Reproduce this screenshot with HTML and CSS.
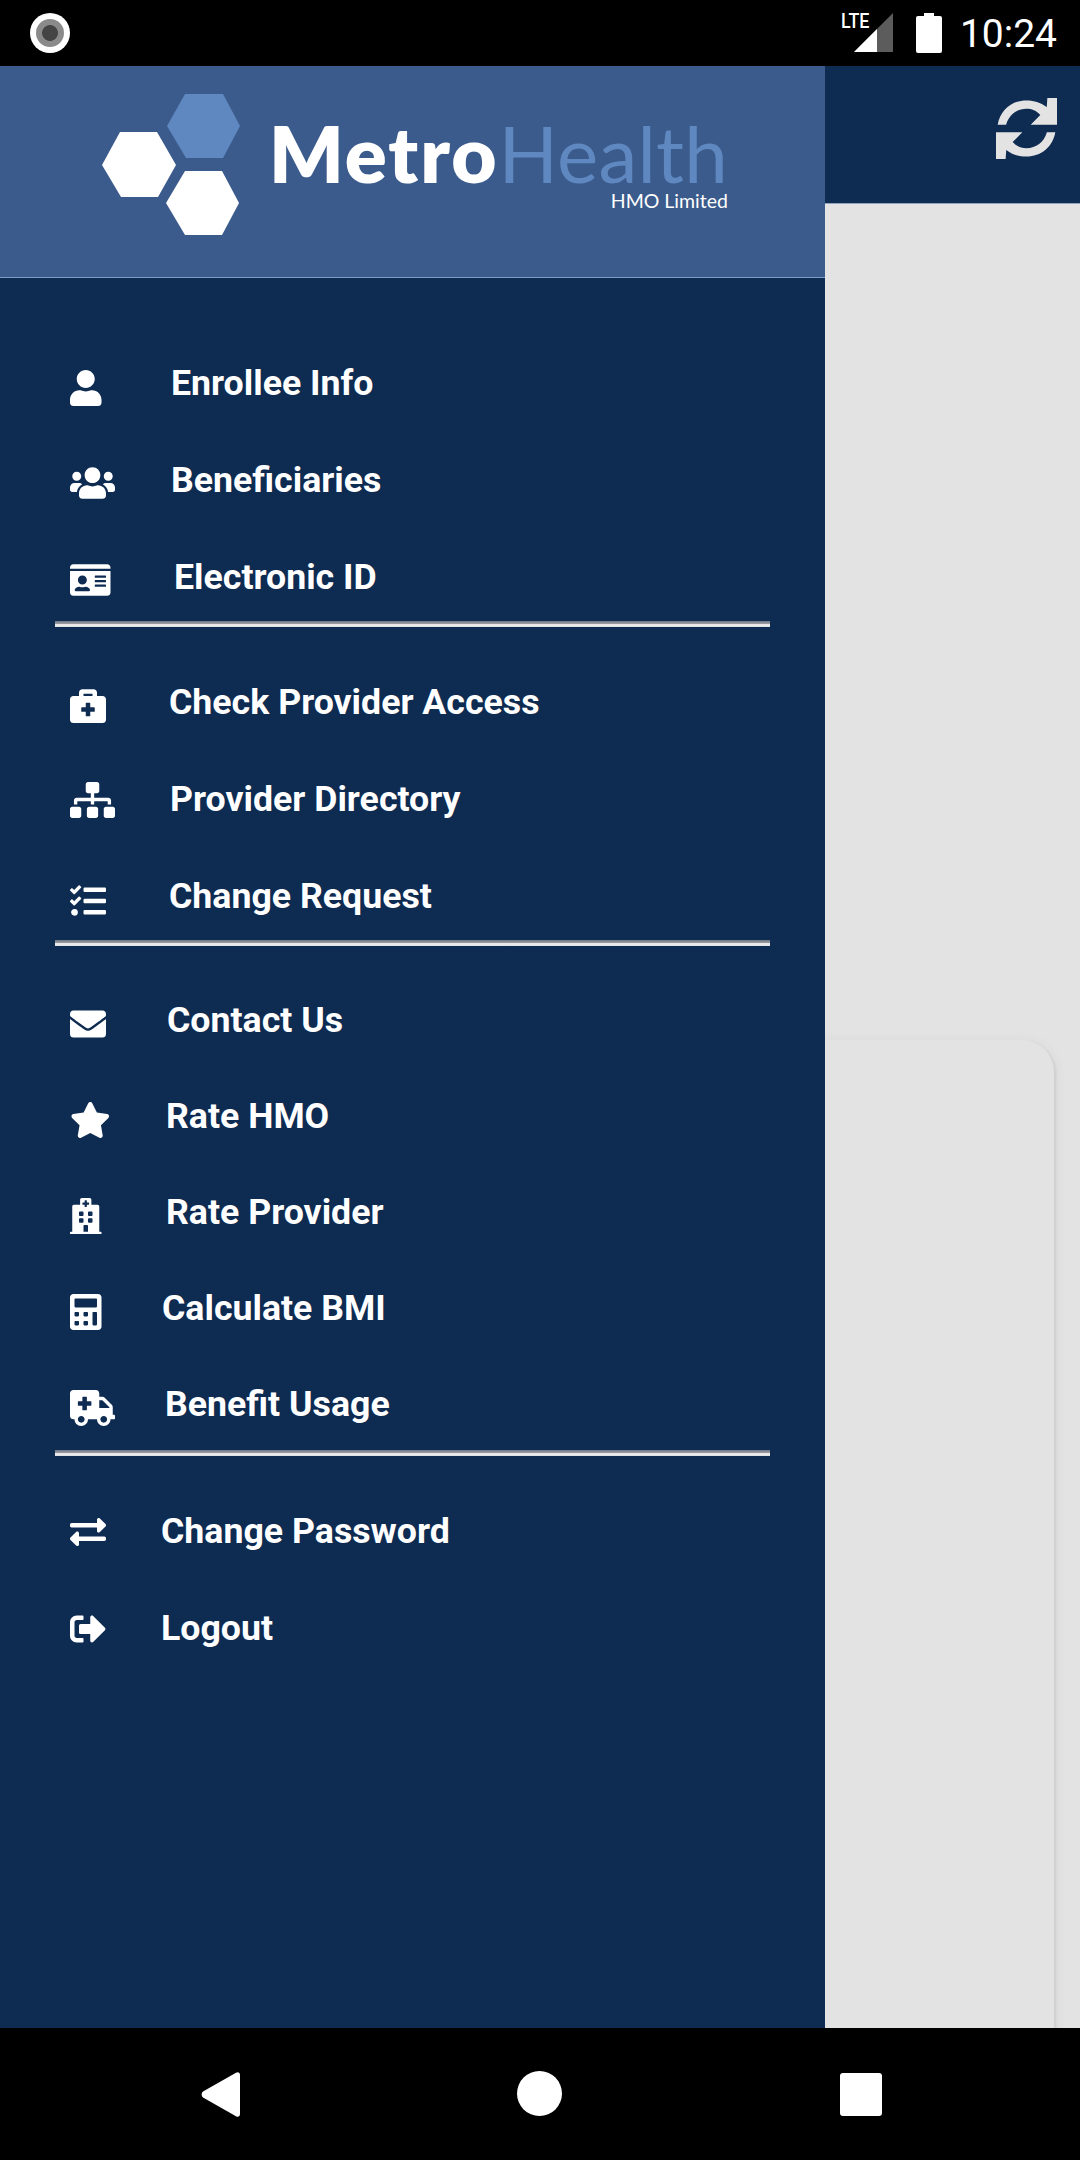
FILE: index.html
```html
<!DOCTYPE html>
<html lang="en">
<head>
    <meta charset="UTF-8">
    <meta name="viewport" content="width=device-width, initial-scale=1.0">
    <title>MetroHealth HMO</title>
    <link rel="stylesheet" href="styles.css">
</head>
<body>

    <div class="screen">
        <!-- Android status bar -->
        <div class="status-bar">
            <span class="record-dot"><span class="record-inner"></span></span>
            <div class="status-right">
                <span class="lte">LTE</span>
                <svg class="signal" viewBox="0 0 39 39"><path fill="#5c5c5c" d="M39 0V39H0z"/><path fill="#fff" d="M23 16V39H0z"/></svg>
                <svg class="battery" viewBox="0 0 26 40"><path fill="#fff" d="M8 0h10v3h6a2 2 0 0 1 2 2v33a2 2 0 0 1-2 2H2a2 2 0 0 1-2-2V5a2 2 0 0 1 2-2h6z"/></svg>
                <span class="clock">10:24</span>
            </div>
        </div>

        <div class="main">
            <!-- Drawer -->
            <div class="drawer">
                <div class="drawer-head">
                    <svg class="hexagons" viewBox="100 93 141 144">
                        <polygon fill="#5f88c0" points="185,94 223,94 240,126 223,158 186,158 167,126"/>
                        <polygon fill="#fff" points="120,132 157,132 176,165 158,197 121,197 102,165"/>
                        <polygon fill="#fff" points="185,171 222,171 239,203 222,235 185,235 166,203"/>
                    </svg>
                    <div class="wordmark">
                        <div class="brand"><span class="brand-metro">Metro</span><span class="brand-health">Health</span></div>
                        <div class="brand-sub">HMO Limited</div>
                    </div>
                </div>

                <div class="menu-group first">
                    <div class="menu-row">
                        <div class="slot s101"><svg class="icon icon-low" viewBox="0 0 448 512"><path d="M224 256c70.7 0 128-57.3 128-128S294.7 0 224 0 96 57.3 96 128s57.3 128 128 128zm89.6 32h-16.7c-22.2 10.2-46.9 16-72.9 16s-50.6-5.8-72.9-16h-16.7C60.2 288 0 348.2 0 422.4V464c0 26.5 21.5 48 48 48h352c26.5 0 48-21.5 48-48v-41.6c0-74.2-60.2-134.4-134.4-134.4z"/></svg></div>
                        <span class="label">Enrollee Info</span>
                    </div>
                    <div class="menu-row">
                        <div class="slot s101"><svg class="icon" viewBox="0 0 640 512"><path d="M96 224c35.3 0 64-28.7 64-64s-28.7-64-64-64-64 28.7-64 64 28.7 64 64 64zm448 0c35.3 0 64-28.7 64-64s-28.7-64-64-64-64 28.7-64 64 28.7 64 64 64zm32 32h-64c-17.6 0-33.5 7.1-45.1 18.6 40.3 22.1 68.9 62 75.1 109.4h66c17.7 0 32-14.3 32-32v-32c0-35.3-28.7-64-64-64zm-256 0c61.9 0 112-50.1 112-112S381.9 32 320 32 208 82.1 208 144s50.1 112 112 112zm76.8 32h-8.3c-20.8 10-43.9 16-68.5 16s-47.6-6-68.5-16h-8.3C179.6 288 128 339.6 128 403.2V432c0 26.5 21.5 48 48 48h288c26.5 0 48-21.5 48-48v-28.8c0-63.6-51.6-115.2-115.2-115.2zm-223.7-13.4C161.5 263.1 145.6 256 128 256H64c-35.3 0-64 28.7-64 64v32c0 17.7 14.3 32 32 32h65.9c6.3-47.4 34.9-87.3 75.2-109.4z"/></svg></div>
                        <span class="label">Beneficiaries</span>
                    </div>
                    <div class="menu-row">
                        <div class="slot s104"><svg class="icon" viewBox="0 0 576 512"><path d="M528 32H48C21.5 32 0 53.5 0 80v16h576V80c0-26.5-21.5-48-48-48zM0 432c0 26.5 21.5 48 48 48h480c26.5 0 48-21.5 48-48V128H0v304zm352-232c0-4.4 3.6-8 8-8h144c4.4 0 8 3.6 8 8v16c0 4.4-3.6 8-8 8H360c-4.4 0-8-3.6-8-8v-16zm0 64c0-4.4 3.6-8 8-8h144c4.4 0 8 3.6 8 8v16c0 4.4-3.6 8-8 8H360c-4.4 0-8-3.6-8-8v-16zm0 64c0-4.4 3.6-8 8-8h144c4.4 0 8 3.6 8 8v16c0 4.4-3.6 8-8 8H360c-4.4 0-8-3.6-8-8v-16zM176 192c35.3 0 64 28.7 64 64s-28.7 64-64 64-64-28.7-64-64 28.7-64 64-64zM67.1 396.2C75.5 370.5 99.6 352 128 352h8.2c12.3 5.1 25.7 8 39.8 8s27.6-2.9 39.8-8h8.2c28.4 0 52.5 18.5 60.9 44.2 3.2 9.9-5.2 19.8-15.6 19.8H82.7c-10.4 0-18.8-10-15.6-19.8z"/></svg></div>
                        <span class="label">Electronic ID</span>
                    </div>
                </div>
                <div class="divider"></div>

                <div class="menu-group">
                    <div class="menu-row">
                        <div class="slot s99"><svg class="icon" viewBox="0 0 512 512"><path fill-rule="evenodd" d="M464 128h-80V80c0-26.5-21.5-48-48-48H176c-26.5 0-48 21.5-48 48v48H48c-26.5 0-48 21.5-48 48v288c0 26.5 21.5 48 48 48h416c26.5 0 48-21.5 48-48V176c0-26.5-21.5-48-48-48zM192 96h128v32H192V96zm160 248c0 4.4-3.6 8-8 8h-56v56c0 4.4-3.6 8-8 8h-48c-4.4 0-8-3.6-8-8v-56h-56c-4.4 0-8-3.6-8-8v-48c0-4.4 3.6-8 8-8h56v-56c0-4.4 3.6-8 8-8h48c4.4 0 8 3.6 8 8v56h56c4.4 0 8 3.6 8 8v48z"/></svg></div>
                        <span class="label">Check Provider Access</span>
                    </div>
                    <div class="menu-row">
                        <div class="slot s100"><svg class="icon icon-high" viewBox="0 0 640 512"><path d="M128 352H32c-17.67 0-32 14.33-32 32v96c0 17.67 14.33 32 32 32h96c17.67 0 32-14.33 32-32v-96c0-17.67-14.33-32-32-32zm-24-80h192v48h48v-48h192v48h48v-57.59c0-21.17-17.23-38.41-38.41-38.41H344v-64h40c17.67 0 32-14.33 32-32V32c0-17.67-14.33-32-32-32H256c-17.67 0-32 14.33-32 32v96c0 17.67 14.33 32 32 32h40v64H94.41C73.23 224 56 241.23 56 262.41V320h48v-48zm264 80h-96c-17.67 0-32 14.33-32 32v96c0 17.67 14.33 32 32 32h96c17.67 0 32-14.33 32-32v-96c0-17.67-14.33-32-32-32zm240 0h-96c-17.67 0-32 14.33-32 32v96c0 17.67 14.33 32 32 32h96c17.67 0 32-14.33 32-32v-96c0-17.67-14.33-32-32-32z"/></svg></div>
                        <span class="label">Provider Directory</span>
                    </div>
                    <div class="menu-row">
                        <div class="slot s99"><svg class="icon icon-low" viewBox="0 0 512 512"><path d="M139.61 35.5a12 12 0 0 0-17 0L58.93 98.81l-22.7-22.12a12 12 0 0 0-17 0L3.53 92.41a12 12 0 0 0 0 17l47.59 47.4a12.78 12.78 0 0 0 17.61 0l15.59-15.62L156.52 69a12.09 12.09 0 0 0 .09-17zm0 159.19a12 12 0 0 0-17 0l-63.68 63.72-22.7-22.1a12 12 0 0 0-17 0L3.53 252a12 12 0 0 0 0 17L51 316.5a12.77 12.77 0 0 0 17.6 0l15.7-15.69 72.2-72.22a12 12 0 0 0 .09-16.9zM64 368c-26.49 0-48.59 21.5-48.59 48S37.53 464 64 464a48 48 0 0 0 0-96zm432 16H208a16 16 0 0 0-16 16v32a16 16 0 0 0 16 16h288a16 16 0 0 0 16-16v-32a16 16 0 0 0-16-16zm0-320H208a16 16 0 0 0-16 16v32a16 16 0 0 0 16 16h288a16 16 0 0 0 16-16V80a16 16 0 0 0-16-16zm0 160H208a16 16 0 0 0-16 16v32a16 16 0 0 0 16 16h288a16 16 0 0 0 16-16v-32a16 16 0 0 0-16-16z"/></svg></div>
                        <span class="label">Change Request</span>
                    </div>
                </div>
                <div class="divider"></div>

                <div class="menu-group tight">
                    <div class="menu-row">
                        <div class="slot s97"><svg class="icon" viewBox="0 0 512 512"><path d="M502.3 190.8c3.9-3.1 9.7-.2 9.7 4.7V400c0 26.5-21.5 48-48 48H48c-26.5 0-48-21.5-48-48V195.6c0-5 5.7-7.8 9.7-4.7 22.4 17.4 52.1 39.5 154.1 113.6 21.1 15.4 56.7 47.8 92.2 47.6 35.7.3 72-32.8 92.3-47.6 102-74.1 131.6-96.3 154-113.7zM256 320c23.2.4 56.6-29.2 73.4-41.4 132.7-96.3 142.8-104.7 173.4-128.7 5.8-4.5 9.2-11.5 9.2-18.9v-19c0-26.5-21.5-48-48-48H48C21.5 64 0 85.5 0 112v19c0 7.4 3.4 14.3 9.2 18.9 30.6 23.9 40.7 32.4 173.4 128.7 16.8 12.2 50.2 41.8 73.4 41.4z"/></svg></div>
                        <span class="label">Contact Us</span>
                    </div>
                    <div class="menu-row">
                        <div class="slot s96"><svg class="icon" viewBox="0 0 576 512"><path d="M259.3 17.8L194 150.2 47.9 171.5c-26.2 3.8-36.7 36.1-17.7 54.6l105.7 103-25 145.5c-4.5 26.3 23.2 46 46.4 33.7L288 439.6l130.7 68.7c23.2 12.2 50.9-7.4 46.4-33.7l-25-145.5 105.7-103c19-18.5 8.5-50.8-17.7-54.6L382 150.2 316.7 17.8c-11.7-23.6-45.6-23.9-57.4 0z"/></svg></div>
                        <span class="label">Rate HMO</span>
                    </div>
                    <div class="menu-row">
                        <div class="slot s96"><svg class="icon" viewBox="0 0 448 512"><path d="M448 492v20H0v-20c0-6.627 5.373-12 12-12h20V120c0-13.255 10.745-24 24-24h88V24c0-13.255 10.745-24 24-24h112c13.255 0 24 10.745 24 24v72h88c13.255 0 24 10.745 24 24v360h20c6.627 0 12 5.373 12 12zM308 192h-40c-6.627 0-12 5.373-12 12v40c0 6.627 5.373 12 12 12h40c6.627 0 12-5.373 12-12v-40c0-6.627-5.373-12-12-12zm-168 64h40c6.627 0 12-5.373 12-12v-40c0-6.627-5.373-12-12-12h-40c-6.627 0-12 5.373-12 12v40c0 6.627 5.373 12 12 12zm104 128h-40c-6.627 0-12 5.373-12 12v84h64v-84c0-6.627-5.373-12-12-12zm64-96h-40c-6.627 0-12 5.373-12 12v40c0 6.627 5.373 12 12 12h40c6.627 0 12-5.373 12-12v-40c0-6.627-5.373-12-12-12zm-116 12c0-6.627-5.373-12-12-12h-40c-6.627 0-12 5.373-12 12v40c0 6.627 5.373 12 12 12h40c6.627 0 12-5.373 12-12v-40zM182 96h26v26a6 6 0 0 0 6 6h20a6 6 0 0 0 6-6V96h26a6 6 0 0 0 6-6V70a6 6 0 0 0-6-6h-26V38a6 6 0 0 0-6-6h-20a6 6 0 0 0-6 6v26h-26a6 6 0 0 0-6 6v20a6 6 0 0 0 6 6z"/></svg></div>
                        <span class="label">Rate Provider</span>
                    </div>
                    <div class="menu-row">
                        <div class="slot s92"><svg class="icon" viewBox="0 0 448 512"><path d="M400 0H48C22.4 0 0 22.4 0 48v416c0 25.6 22.4 48 48 48h352c25.6 0 48-22.4 48-48V48c0-25.6-22.4-48-48-48zM128 435c0 6.4-6.4 12.8-12.8 12.8H76.8c-6.4 0-12.8-6.4-12.8-12.8v-38.4c0-6.4 6.4-12.8 12.8-12.8h38.4c6.4 0 12.8 6.4 12.8 12.8V435zm0-128c0 6.4-6.4 12.8-12.8 12.8H76.8c-6.4 0-12.8-6.4-12.8-12.8v-38.4c0-6.4 6.4-12.8 12.8-12.8h38.4c6.4 0 12.8 6.4 12.8 12.8V307zm128 128c0 6.4-6.4 12.8-12.8 12.8h-38.4c-6.4 0-12.8-6.4-12.8-12.8v-38.4c0-6.4 6.4-12.8 12.8-12.8h38.4c6.4 0 12.8 6.4 12.8 12.8V435zm0-128c0 6.4-6.4 12.8-12.8 12.8h-38.4c-6.4 0-12.8-6.4-12.8-12.8v-38.4c0-6.4 6.4-12.8 12.8-12.8h38.4c6.4 0 12.8 6.4 12.8 12.8V307zm128 128c0 6.4-6.4 12.8-12.8 12.8h-38.4c-6.4 0-12.8-6.4-12.8-12.8V268.8c0-6.4 6.4-12.8 12.8-12.8h38.4c6.4 0 12.8 6.4 12.8 12.8V435zm0-256c0 6.4-6.4 12.8-12.8 12.8H76.8c-6.4 0-12.8-6.4-12.8-12.8V76.8C64 70.4 70.4 64 76.8 64h294.4c6.4 0 12.8 6.4 12.8 12.8V179.2z"/></svg></div>
                        <span class="label">Calculate BMI</span>
                    </div>
                    <div class="menu-row">
                        <div class="slot s95"><svg class="icon" viewBox="0 0 640 512"><path d="M624 352h-16V243.9c0-12.7-5.1-24.9-14.1-33.9L494 110.1c-9-9-21.2-14.1-33.9-14.1H416V48c0-26.5-21.5-48-48-48H48C21.5 0 0 21.5 0 48v320c0 26.5 21.5 48 48 48h16c0 53 43 96 96 96s96-43 96-96h128c0 53 43 96 96 96s96-43 96-96h48c8.8 0 16-7.2 16-16v-32c0-8.8-7.2-16-16-16zM160 464c-26.5 0-48-21.5-48-48s21.5-48 48-48 48 21.5 48 48-21.5 48-48 48zm144-248c0 4.4-3.6 8-8 8h-56v56c0 4.4-3.6 8-8 8h-48c-4.4 0-8-3.6-8-8v-56h-56c-4.4 0-8-3.6-8-8v-48c0-4.4 3.6-8 8-8h56v-56c0-4.4 3.6-8 8-8h48c4.4 0 8 3.6 8 8v56h56c4.4 0 8 3.6 8 8v48zm176 248c-26.5 0-48-21.5-48-48s21.5-48 48-48 48 21.5 48 48-21.5 48-48 48zm80-208H416V144h44.1l99.9 99.9V256z"/></svg></div>
                        <span class="label">Benefit Usage</span>
                    </div>
                </div>
                <div class="divider"></div>

                <div class="menu-group wide">
                    <div class="menu-row">
                        <div class="slot s91"><svg class="icon icon-flat" viewBox="0 0 512 512"><path d="M0 168v-16c0-13.255 10.745-24 24-24h360V80c0-21.367 25.899-32.042 40.971-16.971l80 80c9.372 9.373 9.372 24.569 0 33.941l-80 80C409.956 271.982 384 261.456 384 240v-48H24c-13.255 0-24-10.745-24-24zm488 152H128v-48c0-21.314-25.862-32.08-40.971-16.971l-80 80c-9.372 9.373-9.372 24.569 0 33.941l80 80C102.057 463.997 128 453.437 128 432v-48h360c13.255 0 24-10.745 24-24v-16c0-13.255-10.745-24-24-24z"/></svg></div>
                        <span class="label">Change Password</span>
                    </div>
                    <div class="menu-row">
                        <div class="slot s91"><svg class="icon icon-flat" viewBox="0 0 512 512"><path d="M497 273L329 441c-15 15-41 4.5-41-17v-96H152c-13.3 0-24-10.7-24-24v-96c0-13.3 10.7-24 24-24h136V88c0-21.4 25.9-32 41-17l168 168c9.3 9.4 9.3 24.6 0 34zM192 436v-40c0-6.6-5.4-12-12-12H96c-17.7 0-32-14.3-32-32V160c0-17.7 14.3-32 32-32h84c6.6 0 12-5.4 12-12V76c0-6.6-5.4-12-12-12H96c-53 0-96 43-96 96v192c0 53 43 96 96 96h84c6.6 0 12-5.4 12-12z"/></svg></div>
                        <span class="label">Logout</span>
                    </div>
                </div>
            </div>

            <!-- Page behind the drawer -->
            <div class="content">
                <div class="top-bar">
                    <svg class="refresh" viewBox="0 0 512 512"><path d="M372 142C340 106 299 90 256 90C178 90 108 141 85 224H14C36 100 135 20 256 20C322 20 381 40 426 76L431 0H512V224H291z"/><path d="M140 370C172 406 213 422 256 422C334 422 404 371 427 288H498C476 412 377 492 256 492C190 492 131 472 86 436L81 512H0V288H221z"/></svg>
                </div>
                <div class="content-body">
                    <div class="card"></div>
                </div>
            </div>
        </div>

        <!-- Android nav bar -->
        <div class="nav-bar">
            <svg class="nav-back" viewBox="0 0 39 45"><path fill="#fff" d="M2 25.500a4 4 0 0 1 0-6L35 .8C37 -.5 39 .5 39 3V42C39 44.500 37 45.500 35 44.200z"/></svg>
            <span class="nav-home"></span>
            <span class="nav-recent"></span>
        </div>
    </div>

</body>
</html>
```

FILE: styles.css
```css
/* General */
body {
    margin: 0;
    padding: 0;
    font-family: Roboto, sans-serif;
    background-color: #000;
}

.screen {
    width: 1080px;
    height: 2160px;
    display: flex;
    flex-direction: column;
    overflow: hidden;
}

/* Status bar */
.status-bar {
    height: 66px;
    flex-shrink: 0;
    background-color: #000;
    display: flex;
    align-items: center;
    justify-content: space-between;
    padding: 0 23px 0 30px;
    color: #fff;
}

.record-dot {
    width: 40px;
    height: 40px;
    border-radius: 50%;
    background-color: #fff;
    display: flex;
    align-items: center;
    justify-content: center;
}

.record-inner {
    width: 28px;
    height: 28px;
    border-radius: 50%;
    background: radial-gradient(circle, #444 0, #444 38%, #8a8a8a 42%, #8a8a8a 100%);
}

.status-right {
    display: flex;
    align-items: flex-start;
    height: 40px;
}

.lte {
    font-family: "Liberation Sans Narrow", Roboto, sans-serif;
    font-size: 21px;
    line-height: 17px;
    font-weight: 500;
    transform: scaleX(0.85);
    transform-origin: left top;
    width: 13px;
}

.signal {
    width: 39px;
    height: 39px;
}

.battery {
    width: 26px;
    height: 40px;
    margin-left: 23px;
}

.clock {
    font-size: 39px;
    line-height: 42px;
    margin-left: 18px;
}

/* Layout */
.main {
    flex: 1;
    display: flex;
    background-color: #e3e3e3;
    min-height: 0;
}

/* Drawer */
.drawer {
    width: 825px;
    flex-shrink: 0;
    background-color: #0e2b52;
    color: #fff;
    position: relative;
    z-index: 2;
}

.drawer-head {
    height: 211px;
    background-color: #3b5b8c;
    border-bottom: 1px solid #7f9cc4;
    display: flex;
    align-items: flex-start;
    padding-left: 100px;
}

.hexagons {
    width: 141px;
    height: 144px;
    margin-top: 27px;
}

.wordmark {
    margin-left: 28px;
    margin-top: 52px;
    text-align: right;
}

.brand {
    font-family: Lato, sans-serif;
    font-size: 78px;
    line-height: 70px;
    white-space: nowrap;
}

.brand-metro {
    font-weight: 800;
    color: #fff;
    letter-spacing: 2px;
}

.brand-health {
    font-weight: 400;
    color: #5f88c0;
    letter-spacing: 0.2px;
}

.brand-sub {
    font-family: Lato, sans-serif;
    font-size: 19.5px;
    line-height: 24px;
    color: #fff;
    margin-top: 1px;
}

/* Menu */
.menu-group {
    display: flex;
    flex-direction: column;
    gap: 7px;
    padding-top: 29px;
}

.menu-group.first {
    padding-top: 59px;
}

.menu-group.tight {
    gap: 6px;
    padding-bottom: 1px;
}

.menu-group.wide {
    gap: 7px;
    padding-top: 30px;
}

.menu-row {
    height: 90px;
    display: flex;
    align-items: center;
    padding-left: 70px;
}

.slot {
    flex-shrink: 0;
    display: flex;
}

.s91 { width: 91px; }
.s92 { width: 92px; }
.s95 { width: 95px; }
.s96 { width: 96px; }
.s97 { width: 97px; }
.s99 { width: 99px; }
.s100 { width: 100px; }
.s101 { width: 101px; }
.s104 { width: 104px; }

.icon {
    height: 36px;
    fill: #fff;
    margin-top: 8px;
}

.icon-low {
    margin-top: 12px;
}

.icon-high {
    margin-top: 4px;
}

.icon-flat {
    margin-top: 2px;
}

.label {
    font-size: 35.7px;
    font-weight: 700;
    line-height: 42px;
    white-space: nowrap;
    margin-top: 2px;
}

.tight .label {
    margin-top: 0;
}

.wide .label {
    margin-top: -1px;
}

.divider {
    width: 715px;
    height: 6px;
    margin-left: 55px;
    background: linear-gradient(#6d7685, #9a9da3 45%, #f1f1f1 60%, #dcdee2);
}

/* Page behind the drawer */
.content {
    flex: 1;
    display: flex;
    flex-direction: column;
    overflow: hidden;
}

.top-bar {
    height: 138px;
    background-color: #0e2b52;
    border-bottom: 1px solid #8fa3bf;
    display: flex;
    justify-content: flex-end;
    padding: 32px 23px 0 0;
    box-sizing: border-box;
    flex-shrink: 0;
}

.refresh {
    width: 61px;
    height: 61px;
    fill: #e3e3e3;
}

.content-body {
    flex: 1;
    padding: 836px 26px 0 0;
    display: flex;
    overflow: hidden;
}

.card {
    flex: 1;
    margin-left: -40px;
    margin-bottom: -40px;
    background-color: #e3e3e3;
    border-radius: 32px;
    box-shadow: 2px 2px 3px rgba(0, 0, 0, 0.07), 3px 0 12px rgba(0, 0, 0, 0.04);
}

/* Nav bar */
.nav-bar {
    height: 132px;
    flex-shrink: 0;
    background-color: #000;
    position: relative;
}

.nav-back {
    position: absolute;
    left: 201px;
    top: 44px;
    width: 39px;
    height: 45px;
}

.nav-home {
    position: absolute;
    left: 517px;
    top: 43px;
    width: 45px;
    height: 45px;
    border-radius: 50%;
    background-color: #fff;
}

.nav-recent {
    position: absolute;
    left: 840px;
    top: 45px;
    width: 42px;
    height: 43px;
    border-radius: 3px;
    background-color: #fff;
}
```
